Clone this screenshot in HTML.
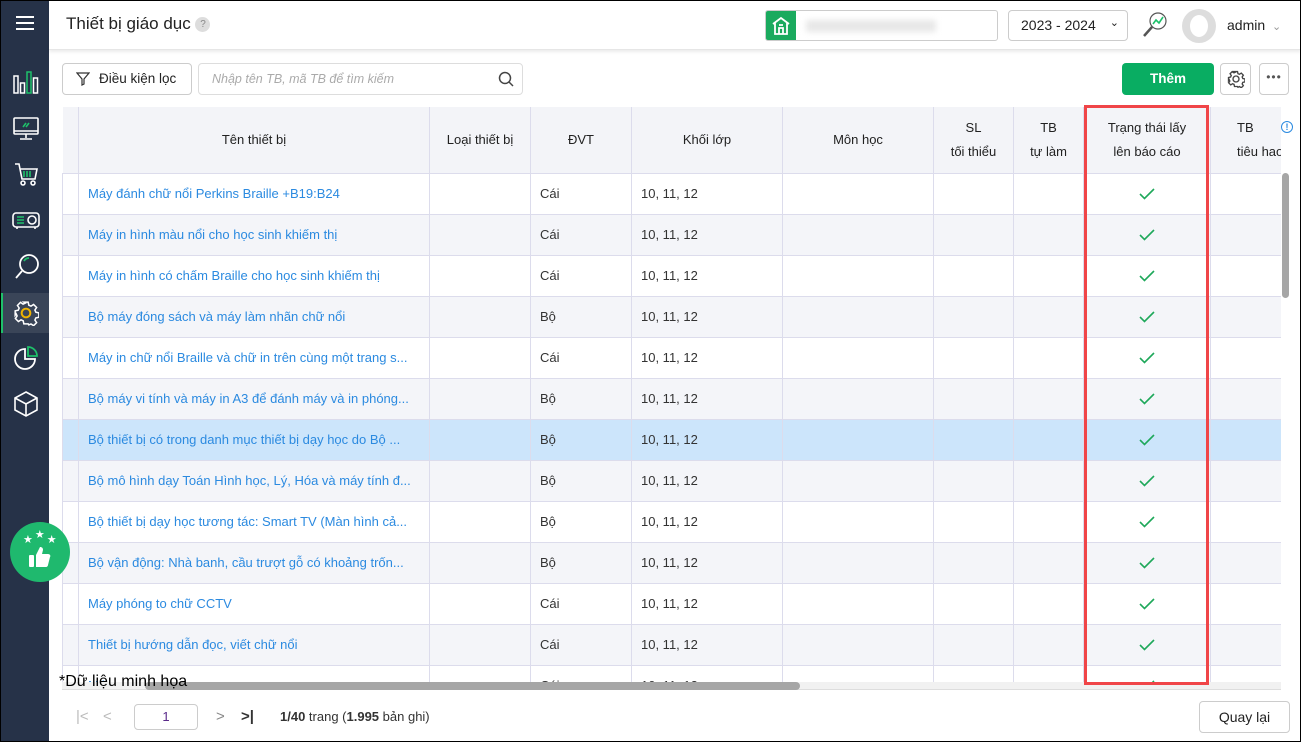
<!DOCTYPE html>
<html><head><meta charset="utf-8">
<style>
*{box-sizing:border-box;margin:0;padding:0}
body{width:1301px;height:742px;overflow:hidden;background:#fff;font-family:"Liberation Sans",sans-serif;font-size:13px;color:#222;position:relative}
.frame{position:absolute;left:0;top:0;width:1301px;height:742px;border:1px solid #000;z-index:50;pointer-events:none}
.sb{position:absolute;left:0;top:0;width:49px;height:742px;background:#263248}
.abs{position:absolute}
.hdr{position:absolute;left:49px;top:0;right:0;height:50px;background:#fff;box-shadow:0 2px 3px rgba(0,0,0,.08);border-bottom:1px solid #e6e6e6}
.btn{position:absolute;border:1px solid #ccc;border-radius:4px;background:#fff}
table{border-collapse:collapse;table-layout:fixed}
td,th{border:1px solid #dcdcec;height:41px;font-size:13px;white-space:nowrap;overflow:hidden}
th{background:#f3f4f8;font-weight:normal;color:#222;height:66px;line-height:24px;border-top:none}
td{padding-left:9px;color:#333}
td.n{color:#2b8ae0}
tr.s td{background:#f4f5f9}
tr.sel td{background:#cce5fb}
td.c{text-align:center;padding:0}
td.c svg{display:block;margin:0 auto}
</style></head><body>
<div class="frame"></div>
<div class="sb">
 <div class="abs" style="left:16px;top:16px;width:18px;height:2px;background:#fff;box-shadow:0 6px 0 #fff,0 12px 0 #fff"></div>
 <svg class="abs" style="left:13px;top:70px" width="26" height="24" viewBox="0 0 26 24" fill="none" stroke="#fff" stroke-width="1.5"><rect x="1" y="6" width="4" height="17"/><rect x="7.5" y="13" width="4" height="10"/><rect x="14" y="2" width="4" height="21" stroke="#1ec06a"/><rect x="20.5" y="8" width="4" height="15"/></svg>
 <svg class="abs" style="left:13px;top:117px" width="26" height="24" viewBox="0 0 26 24" fill="none" stroke="#fff" stroke-width="1.6"><rect x="1" y="1" width="24" height="16" rx="1"/><path d="M1 14h24M13 17v4M7 22h12"/><path d="M10 10l3-4M13 10l3-4" stroke="#1ec06a"/></svg>
 <svg class="abs" style="left:14px;top:162px" width="24" height="26" viewBox="0 0 24 26" fill="none" stroke="#fff" stroke-width="1.6"><path d="M1 2h4l3 15h13l2-10H6"/><path d="M10 9v6M13 9v6M16 9v6" stroke="#1ec06a"/><circle cx="9" cy="21" r="2"/><circle cx="19" cy="21" r="2"/></svg>
 <svg class="abs" style="left:12px;top:210px" width="28" height="22" viewBox="0 0 28 22" fill="none" stroke="#fff" stroke-width="1.6"><rect x="1" y="3" width="26" height="14" rx="3"/><circle cx="20" cy="10" r="4"/><path d="M5 7h7M5 10h7M5 13h7" stroke="#1ec06a"/><path d="M5 17v2M23 17v2"/></svg>
 <svg class="abs" style="left:14px;top:253px" width="26" height="28" viewBox="0 0 26 28" fill="none" stroke="#fff" stroke-width="1.8"><circle cx="15" cy="11" r="9"/><path d="M8 18L2 25"/><path d="M10 8a6 6 0 0 1 5-3" stroke="#1ec06a"/></svg>
 <div class="abs" style="left:0;top:293px;width:49px;height:40px;background:#3a4558"></div>
 <div class="abs" style="left:0;top:293px;width:3px;height:40px;background:#1ec06a"></div>
 <svg class="abs" style="left:13px;top:300px" width="26" height="26" viewBox="0 0 24 24" fill="none" stroke="#fff" stroke-width="1.4"><path d="M10 2h4l.6 2.8 2 .9 2.4-1.6 2.8 2.8-1.6 2.4.9 2 2.8.6v4l-2.8.6-.9 2 1.6 2.4-2.8 2.8-2.4-1.6-2 .9L14 22h-4l-.6-2.8-2-.9-2.4 1.6-2.8-2.8 1.6-2.4-.9-2L2 14v-4l2.8-.6.9-2-1.6-2.4 2.8-2.8 2.4 1.6 2-.9z"/><circle cx="12" cy="12" r="4" stroke="#f0b400" stroke-width="1.8"/></svg>
 <svg class="abs" style="left:14px;top:345px" width="24" height="26" viewBox="0 0 24 26" fill="none" stroke="#fff" stroke-width="1.8"><path d="M11 4a10 10 0 1 0 10 10H11z"/><path d="M14 2a9 9 0 0 1 9 9h-9z" stroke="#1ec06a"/></svg>
 <svg class="abs" style="left:14px;top:391px" width="24" height="26" viewBox="0 0 24 26" fill="none" stroke="#fff" stroke-width="1.6"><path d="M12 1l11 6v12l-11 6-11-6V7z"/><path d="M1 7l11 6 11-6M12 13v12"/></svg>
</div>
<div class="abs" style="left:10px;top:522px;width:60px;height:60px;border-radius:50%;background:#1fb96e;z-index:5">
 <div class="abs" style="left:13px;top:11px;color:#fff;font-size:11px;letter-spacing:2px">★<span style="position:relative;top:-5px">★</span>★</div>
 <svg class="abs" style="left:19px;top:24px" width="22" height="22" viewBox="0 0 22 22" fill="#fff"><rect x="0" y="9" width="5" height="12" rx="1"/><path d="M7 9l4-8c2 0 3 1 3 3l-1 4h6c2 0 3 2 2 3l-2 8c0 1-1 2-2 2H7z"/></svg>
</div>
<div class="hdr">
 <div class="abs" style="left:17px;top:14px;font-size:17px;color:#222">Thiết bị giáo dục <span style="display:inline-block;width:15px;height:15px;border-radius:50%;background:#ddd;color:#888;font-size:10px;text-align:center;line-height:15px;vertical-align:2px">?</span></div>
 <div class="abs" style="left:716px;top:10px;width:233px;height:31px;border:1px solid #ccc;border-radius:3px;overflow:hidden">
  <div class="abs" style="left:0;top:0;width:30px;height:31px;background:#1aaa5e"></div>
  <svg class="abs" style="left:6px;top:5px" width="18" height="19" viewBox="0 0 18 19" fill="none" stroke="#fff" stroke-width="1.8"><path d="M1 8l8-6 8 6M3 7v11h12V7M7 18v-6h4v6M7 9h4"/></svg>
  <div class="abs" style="left:40px;top:9px;width:130px;height:12px;background:#e8e8e8;filter:blur(3px)"></div>
 </div>
 <div class="btn" style="left:959px;top:10px;width:120px;height:31px;font-size:14px;line-height:29px;padding-left:12px;color:#222">2023 - 2024<span style="position:absolute;right:8px;top:-2px;font-size:11px">&#8964;</span></div>
 <svg class="abs" style="left:1093px;top:11px" width="26" height="28" viewBox="0 0 26 28" fill="none"><circle cx="16" cy="10" r="8" stroke="#555" stroke-width="1.2"/><path d="M10 16L2 25" stroke="#555" stroke-width="2.5"/><path d="M11 13l3-4 3 3 4-6" stroke="#1ec06a" stroke-width="1.6"/></svg>
 <div class="abs" style="left:1133px;top:9px;width:34px;height:34px;border-radius:50%;background:#ddd"><div style="margin:6px auto;width:18px;height:22px;border-radius:50%;background:#fff"></div></div>
 <div class="abs" style="left:1178px;top:17px;font-size:14px;color:#222">admin <span style="color:#999;font-size:11px;margin-left:3px">&#8964;</span></div>
</div>
<div class="btn" style="left:62px;top:63px;width:130px;height:32px;line-height:30px;padding-left:36px;font-size:13.5px">Điều kiện lọc</div>
<svg class="abs" style="left:76px;top:72px" width="14" height="14" viewBox="0 0 14 14" fill="none" stroke="#333" stroke-width="1.2"><path d="M1 1h12L8 7v5l-2 1V7z"/></svg>
<div class="btn" style="left:198px;top:63px;width:325px;height:32px;border-color:#ddd;line-height:30px;padding-left:13px;font-style:italic;color:#aaa;font-size:12.5px">Nhập tên TB, mã TB để tìm kiếm</div>
<svg class="abs" style="left:498px;top:71px" width="16" height="16" viewBox="0 0 16 16" fill="none" stroke="#444" stroke-width="1.5"><circle cx="7" cy="7" r="5.5"/><path d="M11 11l4 4"/></svg>
<div class="abs" style="left:1122px;top:63px;width:92px;height:32px;background:#09ad62;border-radius:4px;color:#fff;font-weight:bold;text-align:center;line-height:32px;font-size:13.5px">Thêm</div>
<div class="btn" style="left:1220px;top:63px;width:31px;height:32px"></div>
<svg class="abs" style="left:1227px;top:70px" width="18" height="18" viewBox="0 0 24 24" fill="none" stroke="#444" stroke-width="1.8"><path d="M10 2h4l.6 2.8 2 .9 2.4-1.6 2.8 2.8-1.6 2.4.9 2 2.8.6v4l-2.8.6-.9 2 1.6 2.4-2.8 2.8-2.4-1.6-2 .9L14 22h-4l-.6-2.8-2-.9-2.4 1.6-2.8-2.8 1.6-2.4-.9-2L2 14v-4l2.8-.6.9-2-1.6-2.4 2.8-2.8 2.4 1.6 2-.9z"/><circle cx="12" cy="12" r="4"/></svg>
<div class="btn" style="left:1259px;top:63px;width:30px;height:32px;text-align:center;line-height:26px;color:#555;font-size:12px;letter-spacing:1px">&#8226;&#8226;&#8226;</div>

<svg width="0" height="0" style="position:absolute"><defs><symbol id="ck" viewBox="0 0 16 12"><path d="M1 6l4.5 4.5L15 1" fill="none" stroke="#1ea85a" stroke-width="1.6"/></symbol></defs></svg>
<div class="abs" style="left:62px;top:107px;width:1219px;height:575px;overflow:hidden">
<table style="width:1219px">
<colgroup><col style="width:16px"><col style="width:351px"><col style="width:101px"><col style="width:101px"><col style="width:151px"><col style="width:151px"><col style="width:80px"><col style="width:70px"><col style="width:127px"><col style="width:71px"></colgroup>
<tr><th style="border-left:none"></th><th>Tên thiết bị</th><th>Loại thiết bị</th><th>ĐVT</th><th>Khối lớp</th><th>Môn học</th><th>SL<br>tối thiểu</th><th>TB<br>tự làm</th><th>Trạng thái lấy<br>lên báo cáo</th><th style="text-align:left;padding-left:26px;border-right:none">TB<br>tiêu hao</th></tr>
<tr><td></td><td class="n">Máy đánh chữ nổi Perkins Braille +B19:B24</td><td></td><td>Cái</td><td>10, 11, 12</td><td></td><td></td><td></td><td class="c"><svg width="16" height="12"><use href="#ck"/></svg></td><td></td></tr>
<tr class="s"><td></td><td class="n">Máy in hình màu nổi cho học sinh khiếm thị</td><td></td><td>Cái</td><td>10, 11, 12</td><td></td><td></td><td></td><td class="c"><svg width="16" height="12"><use href="#ck"/></svg></td><td></td></tr>
<tr><td></td><td class="n">Máy in hình có chấm Braille cho học sinh khiếm thị</td><td></td><td>Cái</td><td>10, 11, 12</td><td></td><td></td><td></td><td class="c"><svg width="16" height="12"><use href="#ck"/></svg></td><td></td></tr>
<tr class="s"><td></td><td class="n">Bộ máy đóng sách và máy làm nhãn chữ nổi</td><td></td><td>Bộ</td><td>10, 11, 12</td><td></td><td></td><td></td><td class="c"><svg width="16" height="12"><use href="#ck"/></svg></td><td></td></tr>
<tr><td></td><td class="n">Máy in chữ nổi Braille và chữ in trên cùng một trang s...</td><td></td><td>Cái</td><td>10, 11, 12</td><td></td><td></td><td></td><td class="c"><svg width="16" height="12"><use href="#ck"/></svg></td><td></td></tr>
<tr class="s"><td></td><td class="n">Bộ máy vi tính và máy in A3 để đánh máy và in phóng...</td><td></td><td>Bộ</td><td>10, 11, 12</td><td></td><td></td><td></td><td class="c"><svg width="16" height="12"><use href="#ck"/></svg></td><td></td></tr>
<tr class="sel"><td></td><td class="n">Bộ thiết bị có trong danh mục thiết bị dạy học do Bộ ...</td><td></td><td>Bộ</td><td>10, 11, 12</td><td></td><td></td><td></td><td class="c"><svg width="16" height="12"><use href="#ck"/></svg></td><td></td></tr>
<tr class="s"><td></td><td class="n">Bộ mô hình dạy Toán Hình học, Lý, Hóa và máy tính đ...</td><td></td><td>Bộ</td><td>10, 11, 12</td><td></td><td></td><td></td><td class="c"><svg width="16" height="12"><use href="#ck"/></svg></td><td></td></tr>
<tr><td></td><td class="n">Bộ thiết bị dạy học tương tác: Smart TV (Màn hình cả...</td><td></td><td>Bộ</td><td>10, 11, 12</td><td></td><td></td><td></td><td class="c"><svg width="16" height="12"><use href="#ck"/></svg></td><td></td></tr>
<tr class="s"><td></td><td class="n">Bộ vận động: Nhà banh, cầu trượt gỗ có khoảng trốn...</td><td></td><td>Bộ</td><td>10, 11, 12</td><td></td><td></td><td></td><td class="c"><svg width="16" height="12"><use href="#ck"/></svg></td><td></td></tr>
<tr><td></td><td class="n">Máy phóng to chữ CCTV</td><td></td><td>Cái</td><td>10, 11, 12</td><td></td><td></td><td></td><td class="c"><svg width="16" height="12"><use href="#ck"/></svg></td><td></td></tr>
<tr class="s"><td></td><td class="n">Thiết bị hướng dẫn đọc, viết chữ nổi</td><td></td><td>Cái</td><td>10, 11, 12</td><td></td><td></td><td></td><td class="c"><svg width="16" height="12"><use href="#ck"/></svg></td><td></td></tr>
<tr><td></td><td class="n">Máy</td><td></td><td>Cái</td><td>10, 11, 12</td><td></td><td></td><td></td><td class="c"><svg width="16" height="12"><use href="#ck"/></svg></td><td></td></tr>
</table>
</div>
<div class="abs" style="left:1281px;top:107px;width:9px;height:575px;background:#fff"></div>
<div class="abs" style="left:1282px;top:173px;width:7px;height:125px;background:#a6a6a6;border-radius:4px"></div>
<div class="abs" style="left:1281px;top:121px;color:#2b8ae0;width:12px;height:12px;border:1px solid #2b8ae0;border-radius:50%;text-align:center;line-height:11px;font-size:9px;font-weight:bold">!</div>
<div class="abs" style="left:62px;top:682px;width:1219px;height:8px;background:#f1f1f1;border-bottom:1px solid #ddd"></div>
<div class="abs" style="left:145px;top:682px;width:655px;height:8px;background:#a6a6a6;border-radius:4px"></div>
<div class="abs" style="left:1084px;top:105px;width:125px;height:580px;border:3px solid #f04548"></div>
<div class="abs" style="left:59px;top:673px;font-size:16px;color:#000">*Dữ liệu minh họa</div>
<div class="abs" style="left:76px;top:708px;color:#bbb;font-size:15px">|&lt;</div>
<div class="abs" style="left:103px;top:708px;color:#bbb;font-size:15px">&lt;</div>
<div class="btn" style="left:134px;top:704px;width:64px;height:26px;text-align:center;line-height:24px;color:#5a2a8a">1</div>
<div class="abs" style="left:216px;top:708px;color:#888;font-size:15px">&gt;</div>
<div class="abs" style="left:241px;top:708px;color:#333;font-size:15px;font-weight:bold">&gt;|</div>
<div class="abs" style="left:280px;top:709px;color:#333;font-size:13px"><b>1/40</b> trang (<b>1.995</b> bản ghi)</div>
<div class="btn" style="left:1199px;top:701px;width:91px;height:32px;text-align:center;line-height:30px;font-size:14px;color:#222">Quay lại</div>
</body></html>
